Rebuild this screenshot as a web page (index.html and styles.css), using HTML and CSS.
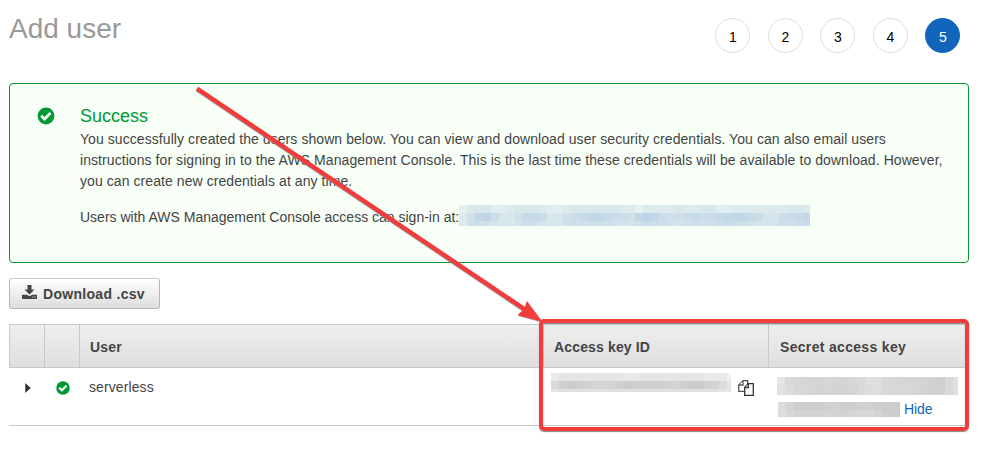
FILE: index.html
```html
<!DOCTYPE html>
<html lang="en">

<head>
    <meta charset="UTF-8">
    <meta name="viewport" content="width=device-width, initial-scale=1.0">
    <title>Add user</title>
    <link rel="stylesheet" href="styles.css">
</head>

<body>
    <header class="page-header">
        <h1>Add user</h1>
        <ol class="steps">
            <li>1</li>
            <li>2</li>
            <li>3</li>
            <li>4</li>
            <li class="active">5</li>
        </ol>
    </header>

    <section class="alert">
        <svg class="alert-icon" viewBox="0 0 18 18">
            <circle cx="9" cy="9" r="8.4" fill="#009933" />
            <path d="M4.2 8.8l3.3 3.2 6-6" fill="none" stroke="#fff" stroke-width="2.7" />
        </svg>
        <div class="alert-body">
            <h2>Success</h2>
            <p class="message">You successfully created the users shown below. You can view and download user security credentials. You can also email users instructions for signing in to the AWS Management Console. This is the last time these credentials will be available to download. However, you can create new credentials at any time.</p>
            <p class="signin">Users with AWS Management Console access can sign-in at:<span class="mosaic mosaic-url" data-mosaic="url"></span></p>
        </div>
    </section>

    <button class="download">
        <svg class="download-icon" viewBox="0 0 15 14">
            <path d="M5.500 0h4v4.500h3L7.500 9.500 2.500 4.500h3z" />
            <path d="M0 9.700h4.700l2.800 1.500 2.800-1.500H15V14H0z" />
            <path d="M10.500 12h1M12.500 12h1" stroke="#eee" />
        </svg>
        Download .csv
    </button>

    <div class="users">
        <div class="users-row users-head">
            <div></div>
            <div></div>
            <div>User</div>
            <div>Access key ID</div>
            <div class="head-secret">Secret access key</div>
        </div>
        <div class="users-row users-item">
            <div class="cell-toggle">
                <svg class="caret" viewBox="0 0 5 9"><path d="M0 0l5 4.500-5 4.500z" /></svg>
            </div>
            <div class="cell-status">
                <svg class="status-icon" viewBox="0 0 18 18">
                    <circle cx="9" cy="9" r="8.700" fill="#009933" />
                    <path d="M4.200 8.800l3.300 3.200 6-6" fill="none" stroke="#fff" stroke-width="2.700" />
                </svg>
            </div>
            <div class="cell-user">serverless</div>
            <div class="cell-key">
                <span class="mosaic mosaic-key" data-mosaic="key"></span>
                <svg class="copy-icon" viewBox="0 0 16 16" fill="#fff" stroke="#555" stroke-width="1.300">
                    <path d="M5 .700H9.600V11.300H.700V5z" />
                    <path d="M5 1v4H1" />
                    <path class="copy-front" d="M10.200 3.700H15.300V15.300H6.700V7.200z" />
                    <path class="copy-front" d="M10.400 4v3.500H7" />
                </svg>
            </div>
            <div class="cell-secret">
                <span class="mosaic mosaic-secret" data-mosaic="secret"></span>
                <div class="secret-line">
                    <span class="mosaic mosaic-secret-end" data-mosaic="secretEnd"></span>
                    <a class="hide-link">Hide</a>
                </div>
            </div>
        </div>
        <div class="highlight"></div>
    </div>

    <svg class="arrow" viewBox="0 0 992 451">
        <g class="arrow-shadow" transform="translate(0 1)">
            <path d="M197 88.500L528 311.500" />
            <polygon points="542,321.500 527,301.500 525.500,309 518,315" />
        </g>
        <path class="arrow-line" d="M197 88.500L528 311.500" />
        <polygon class="arrow-tip" points="542,321.500 527,301.500 524.500,309 518,315" />
    </svg>

    <script src="mosaic.js"></script>
</body>

</html>
```

FILE: styles.css
```css
:root {
    --green: #009933;
    --blue: #1166bb;
    --red: #f23c3c;
    --line: #c8c8c8;
}

* {
    box-sizing: border-box;
}

body {
    margin: 0;
    padding: 0 23px 0 9px;
    height: 451px;
    overflow: hidden;
    position: relative;
    background-color: #ffffff;
    color: #444444;
    font-family: "Liberation Sans", Arial, sans-serif;
    font-size: 14px;
}

h1,
h2,
p {
    margin: 0;
    font-weight: normal;
}

.page-header {
    display: flex;
    justify-content: space-between;
    height: 83px;
    padding-right: 9px;
}

.page-header h1 {
    color: #999999;
    font-size: 28px;
    line-height: 32px;
    padding-top: 13px;
}

.steps {
    display: flex;
    gap: 17.5px;
    margin: 0;
    padding: 18px 0 0;
    list-style: none;
}

.steps li {
    width: 35px;
    height: 35px;
    padding-left: 1px;
    border: 1px solid #dddddd;
    border-radius: 50%;
    color: #000000;
    line-height: 36px;
    text-align: center;
}

.steps .active {
    background-color: var(--blue);
    border-color: var(--blue);
    color: #ffffff;
}

.alert {
    display: flex;
    height: 180px;
    padding: 21px 20px 0 27px;
    border: 1px solid var(--green);
    border-radius: 4px;
    background-color: #f7fff7;
}

.alert-icon {
    flex: none;
    width: 18px;
    height: 18px;
    margin: 2px 25px 0 0;
}

.alert-body h2 {
    color: var(--green);
    font-size: 18px;
    line-height: 22px;
}

.alert-body p {
    line-height: 21px;
}

.alert-body .message {
    padding-top: 2px;
    letter-spacing: 0.07px;
}

.alert-body .signin {
    display: flex;
    margin-top: 15px;
}

.download {
    display: flex;
    align-items: center;
    width: 151px;
    height: 31px;
    margin-top: 15px;
    padding: 0 0 0 12px;
    border: 1px solid #b7b7b7;
    border-top-color: #cccccc;
    border-radius: 3px;
    background: linear-gradient(#ffffff, #dddddd);
    color: #444444;
    font: bold 14px "Liberation Sans", Arial, sans-serif;
    letter-spacing: 0.3px;
    white-space: nowrap;
}

.download-icon {
    flex: none;
    width: 15px;
    height: 14px;
    margin: -3px 6px 0 0;
    fill: #444444;
}

.users {
    position: relative;
    margin-top: 15px;
}

.users-row {
    display: grid;
    grid-template-columns: 35px 35px 464px 225px 201px;
}

.users-head {
    height: 44px;
    border: solid var(--line);
    border-width: 1px 0;
    background: linear-gradient(#eeeeee, #dfdfdf);
    font-weight: bold;
    letter-spacing: 0.15px;
    line-height: 44px;
}

.users-head div {
    height: 42px;
    padding-left: 10px;
    border-left: 1px solid var(--line);
}

.users-head .head-secret {
    padding-left: 11px;
    letter-spacing: 0.32px;
}

.users-item {
    height: 58px;
    border-bottom: 1px solid var(--line);
}

.cell-toggle {
    padding: 15px 0 0 16px;
}

.caret {
    display: block;
    width: 6px;
    height: 10px;
    fill: #333333;
}

.cell-status {
    padding: 13px 0 0 12px;
}

.status-icon {
    display: block;
    width: 14px;
    height: 14px;
}

.cell-user {
    padding: 9px 0 0 10px;
    letter-spacing: 0.1px;
    line-height: 20px;
}

.cell-key {
    display: flex;
    padding: 5px 0 0 8px;
}

.copy-icon {
    width: 16px;
    height: 16px;
    margin: 7px 0 0 7px;
}

.copy-front {
    stroke: #333333;
}

.cell-secret {
    padding: 9px 0 0 9px;
}

.secret-line {
    display: flex;
    gap: 4px;
    height: 15px;
    margin: 7px 0 0 1px;
    line-height: 15px;
}

.hide-link {
    color: var(--blue);
    letter-spacing: -0.1px;
}

/* pixelated blocks over the private values */
.mosaic {
    display: grid;
    grid-template-columns: repeat(50, 8px);
    grid-auto-rows: 8px;
    flex: none;
    overflow: hidden;
}

.mosaic-url {
    width: 351px;
    height: 21px;
    margin-top: -2px;
}

.mosaic-key {
    width: 180px;
    height: 19px;
}

.mosaic-secret {
    width: 181px;
    height: 18px;
}

.mosaic-secret-end {
    width: 122px;
    height: 15px;
}

.highlight {
    position: absolute;
    top: -5px;
    left: 530px;
    width: 430px;
    height: 112px;
    border: 4px solid var(--red);
    border-radius: 5px;
    box-shadow: 0 1px 1px #888888, inset 0 1px 1px #888888;
}

.arrow {
    position: absolute;
    top: 0;
    left: 0;
    width: 992px;
    height: 451px;
    pointer-events: none;
}

.arrow-line {
    stroke: var(--red);
    stroke-width: 4.4;
}

.arrow-tip {
    fill: var(--red);
    stroke: var(--red);
    stroke-width: 0.6;
}

.arrow-shadow {
    fill: #888888;
    stroke: #888888;
    stroke-width: 4.4;
    opacity: 0.8;
}

.arrow-shadow polygon {
    stroke: none;
}
```

FILE: mosaic.js
```js
// one digit per cell, 0 is the lightest shade and 9 the darkest
const mosaics = {
    url: {
        light: [229, 240, 239],
        dark: [190, 212, 230],
        rows: [
            "02331123332112333333220222232233112222222332",
            "25896335776335678876658986556766788876446678",
            "25554334554335555555445665545555666554445566"
        ]
    },
    key: {
        light: [241, 241, 241],
        dark: [204, 204, 204],
        rows: [
            "23333333322333333332220",
            "68988777898888878998753",
            "34444444444444444444432"
        ]
    },
    secret: {
        light: [228, 229, 228],
        dark: [203, 203, 203],
        rows: [
            "04566656654224566667842",
            "13556666664324555667742",
            "13556666664324555667742"
        ]
    },
    secretEnd: {
        light: [224, 224, 223],
        dark: [201, 201, 201],
        rows: [
            "2577776677667888",
            "1455555554345788"
        ]
    }
};

document.querySelectorAll("[data-mosaic]").forEach((box) => {
    const { light, dark, rows } = mosaics[box.dataset.mosaic];

    rows.forEach((row, y) => {
        [...row].forEach((shade, x) => {
            const cell = document.createElement("span");
            const color = light.map((c, i) => Math.round(c + (dark[i] - c) * shade / 9));
            cell.style.backgroundColor = `rgb(${color.join(",")})`;
            cell.style.gridArea = `${y + 1} / ${x + 1}`;
            box.appendChild(cell);
        });
    });
});
```
